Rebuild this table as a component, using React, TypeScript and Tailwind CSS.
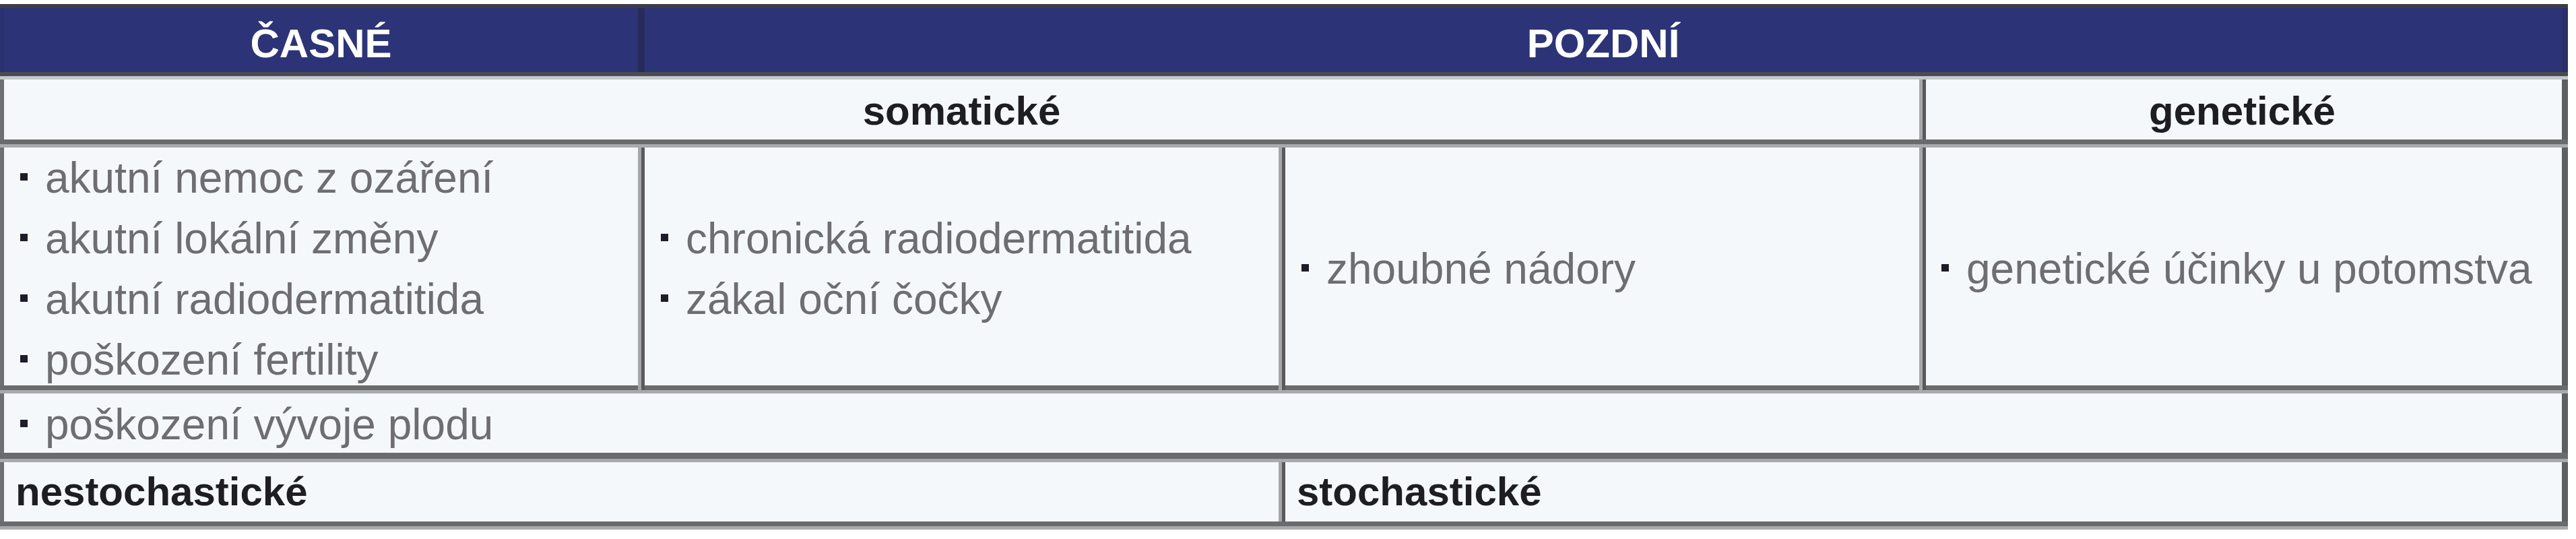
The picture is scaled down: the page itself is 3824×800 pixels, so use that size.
import React from "react";

function Bullet({ text }: { text: string }) {
  return (
    <div className="flex items-center h-[90px] leading-[90px] whitespace-nowrap">
      <span className="inline-block w-[11px] h-[11px] bg-[#1d1c28] mb-[3px]" />
      <span className="ml-[26px]">{text}</span>
    </div>
  );
}

function HDivider({ dark = 7, light = 5 }: { dark?: number; light?: number }) {
  return (
    <div>
      <div className={dark === 9 ? "h-[9px] bg-[#6a6b6d]" : "h-[7px] bg-[#6a6b6d]"} />
      <div className={light === 5 ? "h-[5px] bg-[#a9aaac]" : "h-[5px] bg-[#a9aaac]"} />
    </div>
  );
}

const vdiv = "border-l-[5px] border-l-[#a6a7a9] shadow-[inset_5px_0_0_#58595b]";

export default function App() {
  return (
    <div className="w-[3824px] h-[800px] bg-white pt-[6px] font-['Liberation_Sans',Arial,sans-serif]">
      <div className="w-[3812px]">
        {/* top border */}
        <div className="h-[6px] bg-[#3b3c46]" />
        {/* header */}
        <div className="grid grid-cols-[941px_2856px] h-[95px] bg-[#2c3477] border-l-[6px] border-l-[#2a3170] border-r-[9px] border-r-[#2a2f66] text-white font-bold text-[60px] leading-[60px]">
          <div className="flex items-center justify-center pt-[10px]">ČASNÉ</div>
          <div className="flex items-center justify-center pt-[10px] border-l-[10px] border-l-[#272b5a]">POZDNÍ</div>
        </div>
        <div className="h-[6px] bg-[#4a4b51]" />
        <div className="h-[5px] bg-[#c3c6ca]" />
        {/* row 2 */}
        <div className="grid grid-cols-[2843px_954px] h-[89px] bg-[#f5f8fb] border-l-[6px] border-l-[#6e6f71] border-r-[9px] border-r-[#5e5f61] text-[#1e1e22] font-bold text-[60px] leading-[60px]">
          <div className="flex items-center justify-center pt-[5px]">somatické</div>
          <div className={`flex items-center justify-center pt-[5px] ${vdiv}`}>genetické</div>
        </div>
        <HDivider />
        {/* row 3 */}
        <div className="grid grid-cols-[941px_951px_951px_954px] h-[353px] bg-[#f5f8fb] border-l-[6px] border-l-[#6e6f71] border-r-[9px] border-r-[#5e5f61] text-[#6e6e72] text-[64px]">
          <div className="flex flex-col justify-center pl-[24px]">
            <Bullet text="akutní nemoc z ozáření" />
            <Bullet text="akutní lokální změny" />
            <Bullet text="akutní radiodermatitida" />
            <Bullet text="poškození fertility" />
          </div>
          <div className={`flex flex-col justify-center pl-[29px] ${vdiv}`}>
            <Bullet text="chronická radiodermatitida" />
            <Bullet text="zákal oční čočky" />
          </div>
          <div className={`flex flex-col justify-center pl-[29px] ${vdiv}`}>
            <Bullet text="zhoubné nádory" />
          </div>
          <div className={`flex flex-col justify-center pl-[28px] ${vdiv}`}>
            <Bullet text="genetické účinky u potomstva" />
          </div>
        </div>
        <HDivider />
        {/* row 4 */}
        <div className="flex flex-col justify-center h-[88px] pt-[4px] pl-[24px] bg-[#f5f8fb] border-l-[6px] border-l-[#6e6f71] border-r-[9px] border-r-[#5e5f61] text-[#6e6e72] text-[64px]">
          <Bullet text="poškození vývoje plodu" />
        </div>
        <HDivider dark={9} />
        {/* row 5 */}
        <div className="grid grid-cols-[1892px_1905px] h-[88px] bg-[#f5f8fb] border-l-[6px] border-l-[#6e6f71] border-r-[9px] border-r-[#5e5f61] text-[#1e1e22] font-bold text-[60px] leading-[60px]">
          <div className="flex items-center pl-[17px]">nestochastické</div>
          <div className={`flex items-center pl-[22px] ${vdiv}`}>stochastické</div>
        </div>
        <HDivider />
      </div>
    </div>
  );
}
